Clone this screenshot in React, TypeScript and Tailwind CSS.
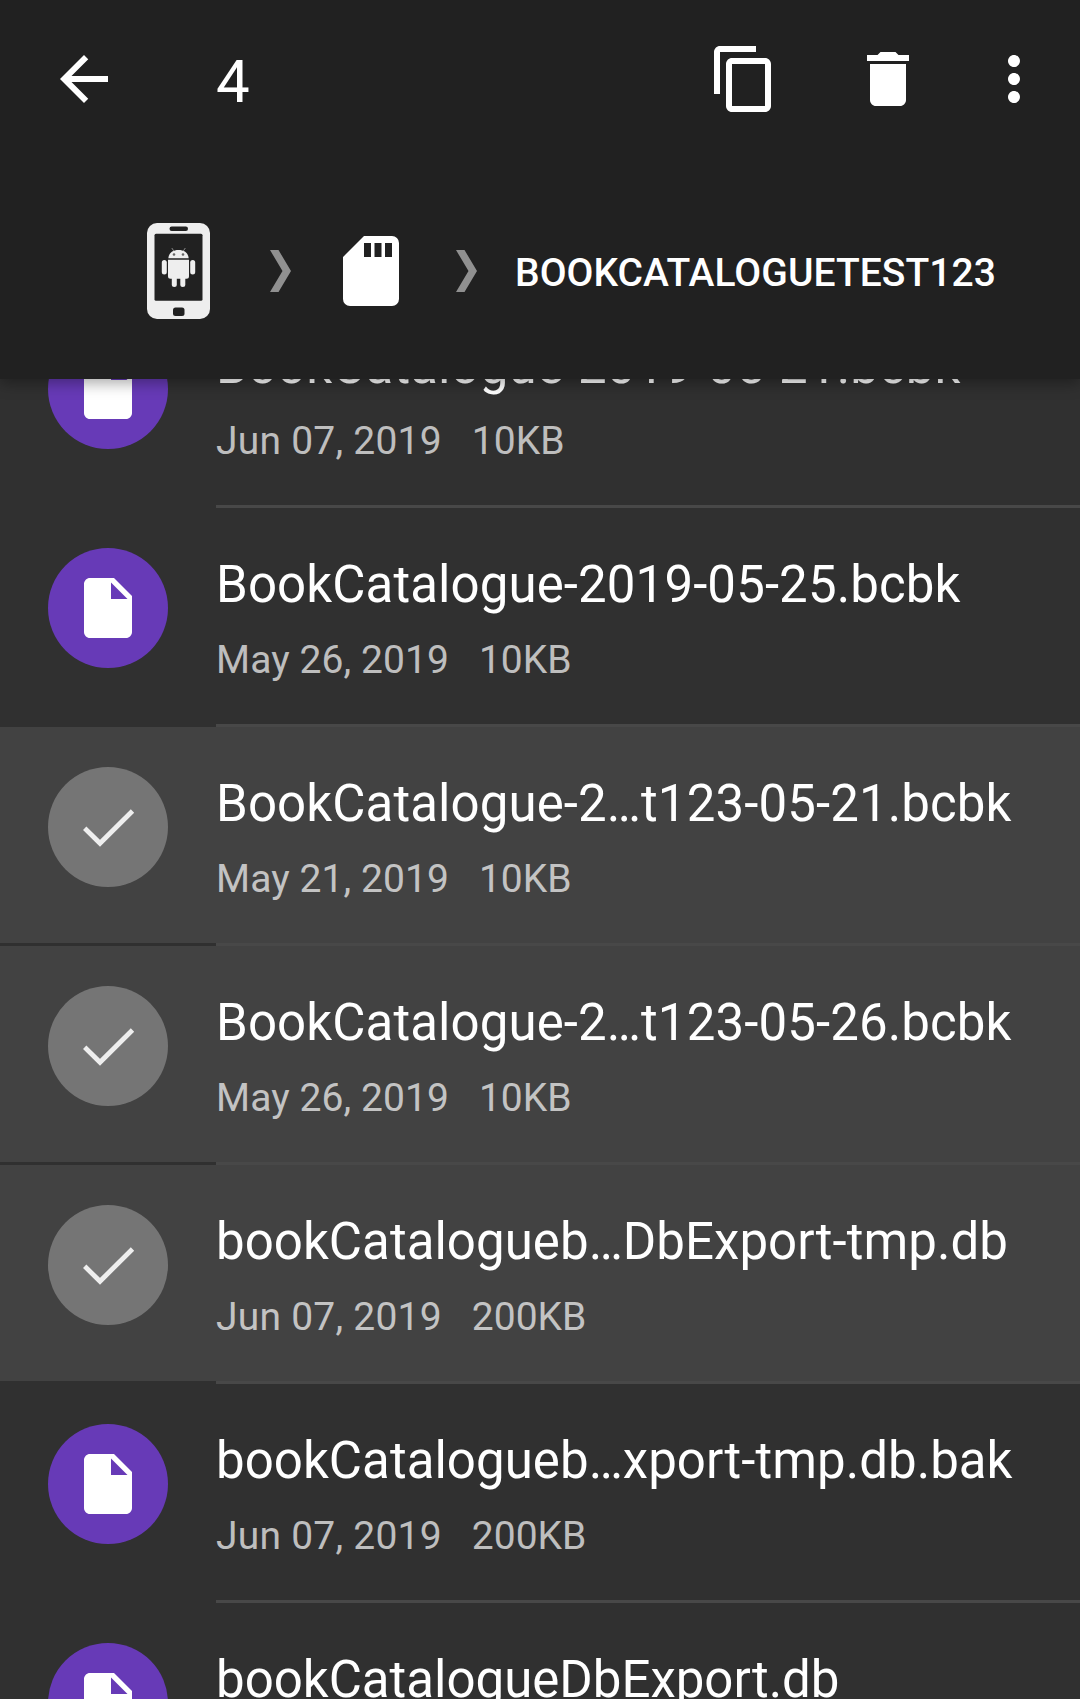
type FileItem = { name: string; date: string; size: string; selected?: boolean };

const files: FileItem[] = [
  { name: "BookCatalogue-2019-05-21.bcbk", date: "Jun 07, 2019", size: "10KB" },
  { name: "BookCatalogue-2019-05-25.bcbk", date: "May 26, 2019", size: "10KB" },
  { name: "BookCatalogue-2…t123-05-21.bcbk", date: "May 21, 2019", size: "10KB", selected: true },
  { name: "BookCatalogue-2…t123-05-26.bcbk", date: "May 26, 2019", size: "10KB", selected: true },
  { name: "bookCatalogueb…DbExport-tmp.db", date: "Jun 07, 2019", size: "200KB", selected: true },
  { name: "bookCatalogueb…xport-tmp.db.bak", date: "Jun 07, 2019", size: "200KB" },
  { name: "bookCatalogueDbExport.db", date: "Jun 07, 2019", size: "200KB" },
];

function Icon({ d }: { d: string }) {
  return (
    <svg viewBox="0 0 24 24" className="size-[72px] shrink-0 fill-current">
      <path d={d} />
    </svg>
  );
}

function Chevron() {
  return (
    <svg viewBox="0 0 21 42" className="h-[42px] w-[21px] shrink-0">
      <path d="M0 0h8.500L21 21 8.500 42H0l12.500-21z" fill="#909090" />
    </svg>
  );
}

function PhoneIcon() {
  return (
    <svg viewBox="0 0 63 96" className="h-24 w-[63px] shrink-0">
      <rect width="63" height="96" rx="10" fill="#eee" />
      <g fill="#212121">
        <rect x="22.500" y="3.500" width="18.500" height="4.500" rx="2.200" />
        <rect x="7.500" y="10.800" width="48" height="67" rx="1.500" />
        <rect x="26" y="84.500" width="11.500" height="8.500" rx="2.500" />
      </g>
      <g fill="#eee">
        <path d="M21.300 35.300c.4-5 4-8.300 10.200-8.300s9.800 3.300 10.200 8.300z" />
        <path d="M21 36.800h21v16.500a2.500 2.500 0 0 1-2.500 2.500h-16a2.500 2.500 0 0 1-2.500-2.500z" />
        <rect x="14.800" y="37" width="5" height="14.500" rx="2.500" />
        <rect x="43.200" y="37" width="5" height="14.500" rx="2.500" />
        <rect x="24.800" y="50" width="5" height="14" rx="2.500" />
        <rect x="33.300" y="50" width="5" height="14" rx="2.500" />
      </g>
      <path d="m24.800 25 2 3M38.300 25l-2 3" stroke="#888" strokeWidth="1" />
      <circle cx="27" cy="31.500" r="1.300" fill="#666" />
      <circle cx="36" cy="31.500" r="1.300" fill="#666" />
    </svg>
  );
}

function Avatar({ selected }: { selected?: boolean }) {
  if (selected) {
    return (
      <div className="flex size-[120px] shrink-0 items-center justify-center rounded-full bg-[#757575]">
        <svg viewBox="0 0 72 72" className="size-[72px]" fill="none">
          <path d="M12.700 37.300 28 52.300 60.500 20" stroke="#eee" strokeWidth="4.800" />
        </svg>
      </div>
    );
  }
  return (
    <div className="flex size-[120px] shrink-0 items-center justify-center rounded-full bg-[#673ab7] text-white">
      <Icon d="M6 2c-1.100 0-2 .9-2 2v16c0 1.100.9 2 2 2h12c1.100 0 2-.9 2-2V8l-6-6H6zm7 7V3.500L18.500 9H13z" />
    </div>
  );
}

function nameTracking(name: string) {
  if (name.startsWith("Book")) return "tracking-[0.11px]";
  return name.includes("…") ? "tracking-[0.05px]" : "tracking-normal";
}

function Row({ file }: { file: FileItem }) {
  return (
    <li>
      <div
        className={
          file.selected
            ? "flex h-[216px] gap-12 bg-[#424242] pt-10 pl-12"
            : "flex h-[216px] gap-12 pt-10 pl-12"
        }
      >
        <Avatar selected={file.selected} />
        <div className="whitespace-nowrap">
          <div className={`mt-[7px] text-[51px] leading-[60px] text-white ${nameTracking(file.name)}`}>
            {file.name}
          </div>
          <div className="mt-[22px] flex gap-[30px] text-[39px] leading-[46px] text-white/70">
            <span className={file.date.startsWith("Jun") ? "tracking-[0.23px]" : "tracking-[0.08px]"}>
              {file.date}
            </span>
            <span>{file.size}</span>
          </div>
        </div>
      </div>
      <div className="ml-[216px] h-[3px] bg-[#484848]" />
    </li>
  );
}

export default function App() {
  return (
    <div className="flex h-[1699px] w-[1080px] flex-col overflow-hidden bg-[#303030] font-['Roboto',sans-serif]">
      <header className="relative z-10 h-[379px] shrink-0 bg-[#212121] text-white shadow-[0_4px_14px_rgba(0,0,0,0.35)]">
        <div className="flex h-[158px] items-center pl-12">
          <Icon d="M20 11H7.830l5.590-5.590L12 4l-8 8 8 8 1.410-1.410L7.830 13H20v-2z" />
          <span className="ml-24 flex-1 pt-[5px] text-[60px] leading-[70px]">4</span>
          <Icon d="M16 1H4c-1.100 0-2 .9-2 2v14h2V3h12V1zm3 4H8c-1.100 0-2 .9-2 2v14c0 1.100.9 2 2 2h11c1.100 0 2-.9 2-2V7c0-1.100-.9-2-2-2zm0 16H8V7h11v14z" />
          <div className="ml-[72px] flex">
            <Icon d="M6 19c0 1.100.9 2 2 2h8c1.100 0 2-.9 2-2V7H6v12zM19 4h-3.500l-1-1h-5l-1 1H5v2h14V4z" />
          </div>
          <div className="mr-[30px] ml-[54px] flex">
            <Icon d="M12 8c1.100 0 2-.9 2-2s-.9-2-2-2-2 .9-2 2 .9 2 2 2zm0 2c-1.100 0-2 .9-2 2s.9 2 2 2 2-.9 2-2-.9-2-2-2zm0 6c-1.100 0-2 .9-2 2s.9 2 2 2 2-.9 2-2-.9-2-2-2z" />
          </div>
        </div>
        <nav className="flex h-[226px] items-center pl-[147px]">
          <PhoneIcon />
          <div className="ml-[60px] flex">
            <Chevron />
          </div>
          <svg viewBox="0 0 56 70" className="ml-[52px] h-[70px] w-14 shrink-0 fill-white">
            <path
              fillRule="evenodd"
              d="M21 0h28a7 7 0 0 1 7 7v56a7 7 0 0 1-7 7H7a7 7 0 0 1-7-7V21zM21 7v14h7V7zM31.500 7v14h7V7zM42 7v14h7V7z"
            />
          </svg>
          <div className="ml-[57px] flex">
            <Chevron />
          </div>
          <span className="ml-[38px] pt-1 text-[39px] leading-[46px] font-medium tracking-[0.04px]">
            BOOKCATALOGUETEST123
          </span>
        </nav>
      </header>
      <ul className="-mt-[90px]">
        {files.map((file) => (
          <Row key={file.name} file={file} />
        ))}
      </ul>
    </div>
  );
}
